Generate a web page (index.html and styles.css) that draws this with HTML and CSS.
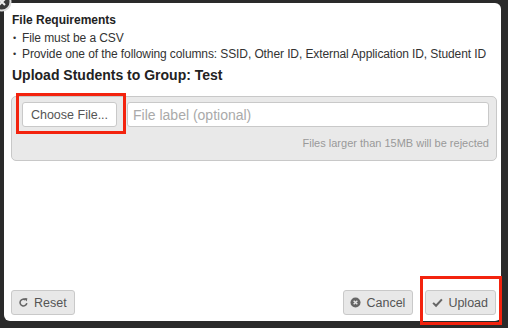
FILE: index.html
```html
<!DOCTYPE html>
<html>
<head>
<meta charset="utf-8">
<link rel="stylesheet" href="styles.css">
</head>
<body>
<div class="frame">
  <div class="modal">
    <div class="body">
      <div class="req-title">File Requirements</div>
      <ul class="req-list">
        <li>File must be a CSV</li>
        <li>Provide one of the following columns: SSID, Other ID, External Application ID, Student ID</li>
      </ul>
      <h2 class="heading">Upload Students to Group: Test</h2>
      <div class="well">
        <div class="row">
          <span class="hl hl-choose"><button class="btn btn-white">Choose File...</button></span>
          <input class="label-input" type="text" placeholder="File label (optional)">
        </div>
        <div class="note">Files larger than 15MB will be rejected</div>
      </div>
    </div>
    <div class="footer">
      <button class="btn"><svg class="ic" viewBox="0 0 12 12" width="11" height="11"><path d="M9.6 6.6A3.7 3.7 0 1 1 8.3 3.2" fill="none" stroke="#666" stroke-width="1.7"/><path d="M6.6 1.2L10.2 1.4 9.6 5z" fill="#666"/></svg>Reset</button>
      <div class="right">
        <button class="btn"><svg class="ic" viewBox="0 0 12 12" width="11" height="11"><circle cx="6" cy="6" r="5.5" fill="#666"/><path d="M4 4L8 8M8 4L4 8" stroke="#e6e6e6" stroke-width="1.6"/></svg>Cancel</button>
        <span class="hl hl-upload"><button class="btn"><svg class="ic" viewBox="0 0 12 12" width="11" height="11"><path d="M1.2 6.4L4.4 9.6 10.8 2.6" fill="none" stroke="#666" stroke-width="2.2"/></svg>Upload</button></span>
      </div>
    </div>
    <div class="close"><svg viewBox="0 0 20 20" width="20" height="20"><circle cx="10" cy="10" r="8.5" fill="#3a3a3a" stroke="#ddd" stroke-width="2"/><path d="M7 7L13 13M13 7L7 13" stroke="#eee" stroke-width="2"/></svg></div>
  </div>
</div>
</body>
</html>
```
FILE: styles.css
```css
* { box-sizing: border-box; }
html, body { margin: 0; padding: 0; }
body {
  width: 508px;
  height: 328px;
  background: #2a2a2a;
  font-family: "Liberation Sans", Arial, sans-serif;
  color: #333;
  overflow: hidden;
}
.frame {
  padding: 3px 7px 7px 4px;
  height: 328px;
}
.modal {
  position: relative;
  background: #fff;
  border-radius: 6px;
  height: 100%;
  display: flex;
  flex-direction: column;
  justify-content: space-between;
}
.body {
  padding: 9px 4px 0 7px;
}
.req-title {
  font-size: 12px;
  font-weight: bold;
  color: #222;
  line-height: 16px;
  margin-left: 1px;
  margin-bottom: 2px;
}
.req-list {
  list-style: none;
  margin: 0;
  padding: 0 0 0 2px;
  font-size: 12px;
  letter-spacing: -0.1px;
  line-height: 16px;
  color: #333;
}
.req-list li::before {
  content: "\2022";
  font-size: 9px;
  display: inline-block;
  width: 9px;
  vertical-align: 1px;
}
.heading {
  font-size: 14px;
  font-weight: bold;
  margin: 4px 0 0 1px;
  line-height: 18px;
  color: #222;
}
.well {
  margin-top: 12px;
  background: #e9e9e9;
  border: 1px solid #c8c8c8;
  border-radius: 5px;
  padding: 5px 7px 6px 10px;
  height: 65px;
}
.row {
  display: flex;
  align-items: center;
  gap: 10px;
}
.hl {
  display: inline-block;
}
.hl-choose {
  position: relative;
}
.hl-choose::after {
  content: "";
  position: absolute;
  left: -6px; top: -9px; right: -9px; bottom: -7px;
  border: 3px solid #f3230e;
}
.btn {
  font-family: "Liberation Sans", Arial, sans-serif;
  font-size: 12.5px;
  color: #555;
  background: #e8e8e8;
  border: 1px solid #c9c9c9;
  border-radius: 3px;
  height: 25px;
  padding: 0 7px 0 6px;
  display: inline-flex;
  align-items: center;
  gap: 5px;
}
.btn-white {
  background: #fff;
  width: 95px;
  justify-content: center;
  padding: 0;
  font-size: 12.5px;
}
.label-input {
  flex: 1;
  height: 25px;
  border: 1px solid #c9c9c9;
  border-radius: 3px;
  font-family: "Liberation Sans", Arial, sans-serif;
  font-size: 14px;
  padding: 0 5px;
  color: #333;
}
.label-input::placeholder { color: #aaa; }
.note {
  text-align: right;
  font-size: 11px;
  color: #999;
  margin-top: 10px;
}
.footer {
  display: flex;
  justify-content: space-between;
  align-items: center;
  padding: 0 5px 6px 7px;
}
.right {
  display: flex;
  gap: 12px;
  align-items: center;
}
.hl-upload {
  position: relative;
}
.hl-upload::after {
  content: "";
  position: absolute;
  left: -5px; top: -14px; right: -6px; bottom: -10px;
  border: 3px solid #f3230e;
}
.ic { flex: none; }
.close {
  position: absolute;
  left: -12px;
  top: -11px;
  width: 20px;
  height: 20px;
}
```
